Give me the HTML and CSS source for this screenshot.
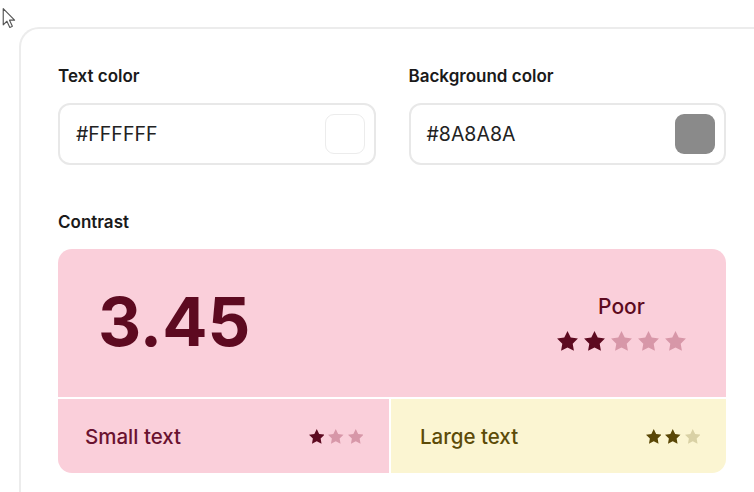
FILE: index.html
```html
<!DOCTYPE html>
<html>
<head>
<meta charset="utf-8">
<link rel="stylesheet" href="styles.css">
</head>
<body>
<svg class="cursor" width="16" height="22" viewBox="0 0 14 21"><path d="M1.5 1.5 L1.5 17 L5 13.6 L7.8 19.5 L10.2 18.4 L7.5 12.6 L12.3 12.6 Z" fill="#fff" stroke="#555" stroke-width="1.1" stroke-linejoin="round"/></svg>
<div class="card">
  <div class="fields">
    <div class="field">
      <div class="label">Text color</div>
      <div class="input">
        <span class="value">#FFFFFF</span>
        <span class="swatch swatch-white"></span>
      </div>
    </div>
    <div class="field">
      <div class="label">Background color</div>
      <div class="input">
        <span class="value">#8A8A8A</span>
        <span class="swatch swatch-gray"></span>
      </div>
    </div>
  </div>
  <div class="label contrast-label">Contrast</div>
  <div class="contrast">
    <div class="top">
      <div class="ratio">3.45</div>
      <div class="rating">
        <div class="rating-text">Poor</div>
        <div class="stars stars-big">
          <svg class="on" viewBox="2 2 20 19.2"><polygon points="12,2 15.09,8.26 22,9.27 17,14.14 18.18,21.02 12,17.77 5.82,21.02 7,14.14 2,9.27 8.91,8.26"/></svg>
          <svg class="on" viewBox="2 2 20 19.2"><polygon points="12,2 15.09,8.26 22,9.27 17,14.14 18.18,21.02 12,17.77 5.82,21.02 7,14.14 2,9.27 8.91,8.26"/></svg>
          <svg class="off" viewBox="2 2 20 19.2"><polygon points="12,2 15.09,8.26 22,9.27 17,14.14 18.18,21.02 12,17.77 5.82,21.02 7,14.14 2,9.27 8.91,8.26"/></svg>
          <svg class="off" viewBox="2 2 20 19.2"><polygon points="12,2 15.09,8.26 22,9.27 17,14.14 18.18,21.02 12,17.77 5.82,21.02 7,14.14 2,9.27 8.91,8.26"/></svg>
          <svg class="off" viewBox="2 2 20 19.2"><polygon points="12,2 15.09,8.26 22,9.27 17,14.14 18.18,21.02 12,17.77 5.82,21.02 7,14.14 2,9.27 8.91,8.26"/></svg>
        </div>
      </div>
    </div>
    <div class="bottom">
      <div class="cell cell-small">
        <span class="cell-text">Small text</span>
        <div class="stars stars-small">
          <svg class="on" viewBox="2 2 20 19.2"><polygon points="12,2 15.09,8.26 22,9.27 17,14.14 18.18,21.02 12,17.77 5.82,21.02 7,14.14 2,9.27 8.91,8.26"/></svg>
          <svg class="off" viewBox="2 2 20 19.2"><polygon points="12,2 15.09,8.26 22,9.27 17,14.14 18.18,21.02 12,17.77 5.82,21.02 7,14.14 2,9.27 8.91,8.26"/></svg>
          <svg class="off" viewBox="2 2 20 19.2"><polygon points="12,2 15.09,8.26 22,9.27 17,14.14 18.18,21.02 12,17.77 5.82,21.02 7,14.14 2,9.27 8.91,8.26"/></svg>
        </div>
      </div>
      <div class="cell cell-large">
        <span class="cell-text">Large text</span>
        <div class="stars stars-small">
          <svg class="on" viewBox="2 2 20 19.2"><polygon points="12,2 15.09,8.26 22,9.27 17,14.14 18.18,21.02 12,17.77 5.82,21.02 7,14.14 2,9.27 8.91,8.26"/></svg>
          <svg class="on" viewBox="2 2 20 19.2"><polygon points="12,2 15.09,8.26 22,9.27 17,14.14 18.18,21.02 12,17.77 5.82,21.02 7,14.14 2,9.27 8.91,8.26"/></svg>
          <svg class="off" viewBox="2 2 20 19.2"><polygon points="12,2 15.09,8.26 22,9.27 17,14.14 18.18,21.02 12,17.77 5.82,21.02 7,14.14 2,9.27 8.91,8.26"/></svg>
        </div>
      </div>
    </div>
  </div>
</div>
</body>
</html>
```

FILE: styles.css
```css
html, body {
  margin: 0;
  padding: 0;
  background: #ffffff;
  overflow: hidden;
  width: 754px;
  height: 492px;
  font-family: Inter, "Noto Sans", sans-serif;
}

.cursor {
  position: absolute;
  left: 1px;
  top: 7px;
}

.card {
  margin: 27px 0 0 19px;
  width: 735px;
  height: 465px;
  box-sizing: border-box;
  border: 2px solid #ececec;
  border-right: none;
  border-bottom: none;
  border-radius: 20px 0 0 0;
  padding: 37px 0 0 37px;
}

.fields {
  display: flex;
  gap: 33px;
  width: 668px;
}

.field {
  flex: 1;
}

.label {
  font-size: 17px;
  line-height: 20px;
  font-weight: 600;
  color: #1a1a1a;
}

.input {
  margin-top: 17px;
  height: 62px;
  box-sizing: border-box;
  border: 2px solid #e8e8e8;
  border-radius: 12px;
  display: flex;
  align-items: center;
  justify-content: space-between;
  padding: 0 9px 0 16px;
}

.value {
  font-size: 19.5px;
  color: #222;
}

.swatch {
  width: 40px;
  height: 40px;
  box-sizing: border-box;
  border-radius: 9px;
}

.swatch-white {
  background: #fff;
  border: 1.5px solid #ececec;
}

.swatch-gray {
  background: #8a8a8a;
}

.contrast-label {
  margin-top: 47px;
}

.contrast {
  margin-top: 17px;
  width: 668px;
  border-radius: 14px;
  overflow: hidden;
  background: #fff;
  display: flex;
  flex-direction: column;
  gap: 2px;
}

.top {
  height: 148px;
  background: #facfda;
  display: flex;
  align-items: center;
  justify-content: space-between;
  padding: 0 40px 0 40px;
}

.ratio {
  font-size: 67px;
  font-weight: 700;
  color: #5d0a20;
  margin-bottom: 3px;
}

.rating {
  display: flex;
  flex-direction: column;
  align-items: center;
  gap: 12px;
  margin-bottom: 2px;
}

.rating-text {
  font-size: 21px;
  font-weight: 500;
  color: #5d0a20;
}

.stars {
  display: flex;
}

.stars-big {
  gap: 6px;
}

.stars-big svg {
  width: 21px;
  height: 20px;
}

.stars-small {
  gap: 4px;
}

.stars-small svg {
  width: 15.5px;
  height: 15px;
}

.bottom {
  display: flex;
  gap: 2px;
  height: 74px;
}

.cell {
  display: flex;
  align-items: center;
  justify-content: space-between;
}

.cell-small {
  width: 331px;
  background: #facfda;
  padding: 0 26px 0 27px;
  box-sizing: border-box;
}

.cell-large {
  flex: 1;
  background: #fbf5d2;
  padding: 0 26px 0 29px;
  box-sizing: border-box;
}

.cell-text {
  font-size: 20.5px;
  font-weight: 500;
}

.cell-small .cell-text {
  color: #6a1230;
}

.cell-large .cell-text {
  color: #5c4b08;
}

.stars-big .on, .cell-small .on {
  fill: #5d0a20;
}

.stars-big .off, .cell-small .off {
  fill: #d797a8;
}

.cell-large .on {
  fill: #5a4706;
}

.cell-large .off {
  fill: #d9d1a5;
}
```
